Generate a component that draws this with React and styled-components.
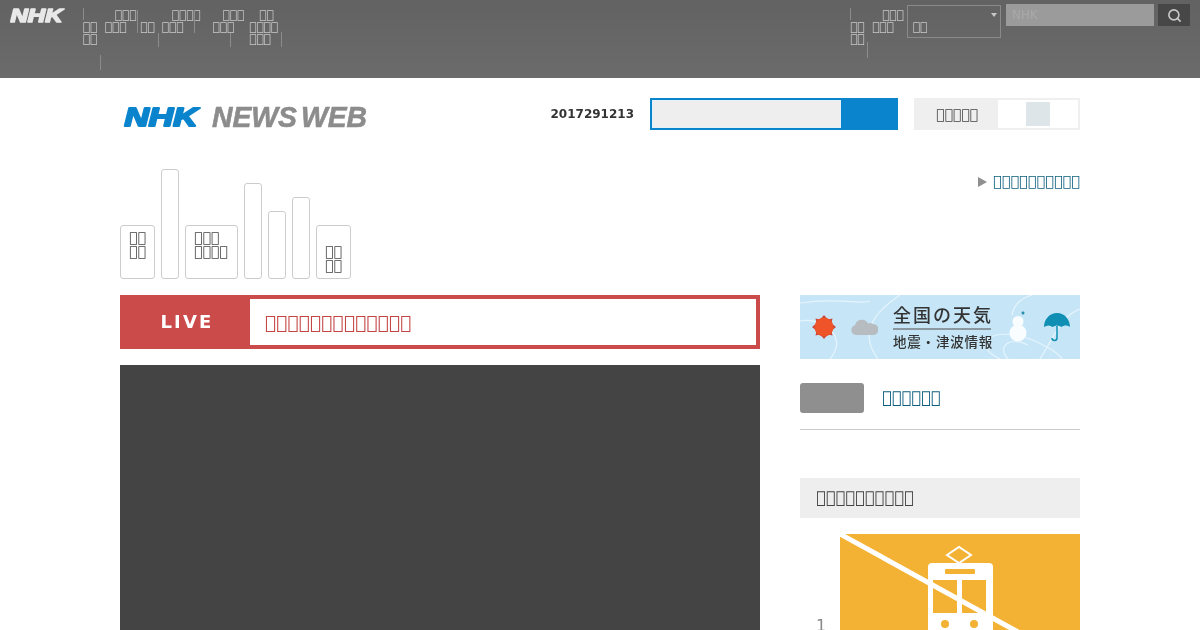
import React from "react";
import styled, { createGlobalStyle } from "styled-components";
import { Search } from "lucide-react";

// the page text shows as missing-glyph boxes in the reference
const boxes = (n) => "\uE000".repeat(n);

const GlobalStyle = createGlobalStyle`
  html, body {
    margin: 0;
    height: 630px;
    overflow: hidden;
    background: #fff;
    font-family: "DejaVu Sans", sans-serif;
  }
`;

const TopBar = styled.header`
  height: 78px;
  background: linear-gradient(#626262, #6b6b6b);
  display: flex;
  justify-content: space-between;
  color: #c8c8c8;
  font-size: 12px;
  line-height: 12px;
  will-change: transform;
`;

const TopLeft = styled.div`
  display: flex;
  align-items: flex-start;
`;

const TopLogo = styled.svg`
  display: block;
  margin: 6px 0 0 9px;
`;

const TopNav = styled.nav`
  display: flex;
  align-items: flex-start;
  margin-left: ${(p) => p.$left}px;
`;

const TopItem = styled.div`
  position: relative;
  margin-left: ${(p) => p.$left || 0}px;
  padding-top: ${(p) => p.$top}px;
`;

const ItemLine = styled.div`
  white-space: nowrap;
  padding-left: ${(p) => p.$indent || 0}px;
`;

const Tick = styled.i`
  position: absolute;
  left: ${(p) => p.$x}px;
  top: ${(p) => p.$y}px;
  height: ${(p) => p.$h}px;
  width: 1px;
  background: #8c8c8c;
`;

const TopRight = styled.div`
  display: flex;
  align-items: flex-start;
  padding-right: 10px;
`;

const Select = styled.div`
  box-sizing: border-box;
  width: 94px;
  height: 33px;
  margin: 5px 0 0 3px;
  border: 1px solid #8a8a8a;
  padding: 15px 0 0 5px;
  position: relative;
  &::after {
    content: "";
    position: absolute;
    right: 3px;
    top: 7px;
    border: 3.5px solid transparent;
    border-top: 4px solid #c8c8c8;
  }
`;

const SiteSearch = styled.div`
  box-sizing: border-box;
  width: 148px;
  height: 22px;
  margin: 4px 0 0 5px;
  background: #9b9b9b;
  color: #a9a9a9;
  padding: 5px 6px;
`;

const SiteSearchButton = styled.div`
  width: 32px;
  height: 22px;
  margin: 4px 0 0 4px;
  background: #474747;
  color: #c8c8c8;
  display: flex;
  align-items: center;
  justify-content: center;
`;

const Page = styled.div`
  width: 960px;
  margin: 0 auto;
  will-change: transform;
`;

const Masthead = styled.div`
  display: flex;
  align-items: center;
  margin-top: 20px;
  height: 32px;
`;

const Logo = styled.svg`
  display: block;
  margin-right: auto;
`;

const DateText = styled.div`
  font-size: 12px;
  font-weight: 700;
  color: #333;
  margin-right: 16px;
`;

const NewsSearch = styled.div`
  box-sizing: border-box;
  width: 248px;
  height: 32px;
  display: flex;
  border: 2px solid #0a84cc;
  background: #0a84cc;
  margin-right: 16px;
`;

const NewsInput = styled.div`
  width: 189px;
  background: #eeeeee;
  border: 1px solid #e4f1f9;
  box-sizing: border-box;
`;

const Toggle = styled.div`
  box-sizing: border-box;
  width: 166px;
  height: 32px;
  display: flex;
  border: 2px solid #efefef;
`;

const ToggleLabel = styled.div`
  width: 82px;
  background: #efefef;
  color: #444;
  font-size: 14px;
  display: flex;
  align-items: center;
  justify-content: center;
`;

const ToggleTrack = styled.div`
  flex: 1;
  display: flex;
  justify-content: center;
  align-items: center;
  padding-right: 1px;
`;

const ToggleKnob = styled.div`
  width: 24px;
  height: 24px;
  background: #dde5e9;
`;

const NavRow = styled.div`
  display: flex;
  justify-content: space-between;
  align-items: flex-start;
  margin-top: 39px;
`;

const Tabs = styled.ul`
  list-style: none;
  margin: 0;
  padding: 0;
  display: flex;
  align-items: flex-end;
  gap: 6px;
  height: 110px;
`;

const Tab = styled.li`
  box-sizing: border-box;
  width: ${(p) => p.$w}px;
  height: ${(p) => p.$h}px;
  border: 1px solid #cccccc;
  border-radius: 3px;
  padding: ${(p) => p.$top ?? 4}px 0 0 8px;
  font-size: 14px;
  line-height: 14px;
  color: #444;
`;

const MoreLink = styled.a`
  display: flex;
  align-items: center;
  gap: 6px;
  margin-top: 4px;
  font-size: 14.5px;
  line-height: 17px;
  color: #0b5d7e;
`;

const Arrow = styled.span`
  border: 5px solid transparent;
  border-left: 9px solid #8f8f8f;
  border-right: 0;
`;

const Columns = styled.div`
  display: flex;
  justify-content: space-between;
  margin-top: 16px;
`;

const MainColumn = styled.main`
  width: 640px;
`;

const LiveBar = styled.div`
  box-sizing: border-box;
  height: 54px;
  display: flex;
  border: 4px solid #cb4b4b;
  background: #fff;
`;

const LiveBadge = styled.div`
  width: 126px;
  margin: -4px 0 -4px -4px;
  padding: 0 0 2px 4px;
  background: #cb4b4b;
  color: #fff;
  font-weight: 700;
  font-size: 18px;
  letter-spacing: 2.2px;
  display: flex;
  align-items: center;
  justify-content: center;
`;

const LiveTitle = styled.div`
  padding-left: 15px;
  color: #c44545;
  font-size: 18.8px;
  display: flex;
  align-items: center;
`;

const Video = styled.div`
  margin-top: 16px;
  height: 360px;
  background: #444444;
`;

const SideColumn = styled.aside`
  width: 280px;
`;

const WeatherBanner = styled.a`
  display: flex;
  align-items: center;
  height: 64px;
  position: relative;
  background: #c6e6f8;
  overflow: hidden;
`;

const Contours = styled.svg`
  position: absolute;
  inset: 0;
`;

const WeatherIcon = styled.svg`
  display: block;
  position: relative;
  flex: none;
  margin-left: ${(p) => p.$left}px;
`;

const WeatherText = styled.div`
  position: relative;
  margin-left: 15px;
  width: 98px;
  flex: none;
  color: #333;
  font-family: "Noto Sans CJK JP", sans-serif;
  font-weight: 500;
`;

const WeatherTitle = styled.div`
  font-size: 18px;
  line-height: 24px;
  padding-bottom: 2px;
  border-bottom: 2px solid #8b98a0;
  white-space: nowrap;
  letter-spacing: 2px;
`;

const WeatherSub = styled.div`
  font-size: 13.5px;
  line-height: 22px;
  white-space: nowrap;
  letter-spacing: 0.8px;
`;

const NewsRow = styled.div`
  display: flex;
  align-items: center;
  gap: 18px;
  margin-top: 24px;
  padding-bottom: 16px;
  border-bottom: 1px solid #cccccc;
`;

const GreyButton = styled.div`
  width: 64px;
  height: 30px;
  background: #8f8f8f;
  border-radius: 3px;
`;

const NewsLink = styled.a`
  font-size: 16.3px;
  line-height: 28px;
  color: #0b5d7e;
`;

const SectionTitle = styled.h2`
  margin: 48px 0 16px;
  height: 40px;
  padding-left: 16px;
  background: #eeeeee;
  color: #444;
  font-size: 16.3px;
  font-weight: 400;
  line-height: 40px;
`;

const RankItem = styled.div`
  display: flex;
`;

const RankNumber = styled.div`
  width: 40px;
  box-sizing: border-box;
  padding: 82px 0 0 16px;
  color: #888;
  font-size: 16px;
  line-height: 20px;
`;

const RankImage = styled.svg`
  display: block;
  background: #f3b233;
`;

const navLeft = [
  { top: 21, w: 22, lines: [[2], [2]], ticks: [{ x: 0, y: 8, h: 12 }, { x: 17, y: 55, h: 15 }] },
  { left: 0, top: 9, lines: [[3, 10], [3]], ticks: [{ x: 32, y: 10, h: 23 }] },
  { left: 4, top: 21, lines: [[2]], ticks: [{ x: 17, y: 33, h: 14 }] },
  { left: 7, top: 9, lines: [[4, 10], [3]], ticks: [{ x: 32, y: 10, h: 23 }] },
  { left: 12, top: 9, lines: [[3, 10], [3]], ticks: [{ x: 17, y: 33, h: 14 }] },
  { left: 5, top: 9, lines: [[2, 10], [4], [3]], ticks: [{ x: 32, y: 32, h: 15 }] },
];

const tabs = [
  { w: 35, h: 54, lines: [2, 2] },
  { w: 18, h: 110 },
  { w: 53, h: 54, lines: [3, 4] },
  { w: 18, h: 96 },
  { w: 18, h: 68 },
  { w: 18, h: 82 },
  { w: 35, h: 54, lines: [2, 2], top: 18 },
];

function NavItem({ item }) {
  return (
    <TopItem $left={item.left} $top={item.top} style={item.w ? { width: item.w } : undefined}>
      {item.lines.map(([n, indent], i) => (
        <ItemLine key={i} $indent={indent}>
          {boxes(n)}
        </ItemLine>
      ))}
      {item.ticks.map((t, i) => (
        <Tick key={i} $x={t.x} $y={t.y} $h={t.h} />
      ))}
    </TopItem>
  );
}

export default function App() {
  return (
    <>
      <GlobalStyle />
      <TopBar>
        <TopLeft>
          <TopLogo width="58" height="20" viewBox="0 0 58 20">
            <text
              x="1.500"
              y="16"
              textLength="52"
              lengthAdjust="spacingAndGlyphs"
              fontFamily="Liberation Sans"
              fontWeight="700"
              fontStyle="italic"
              fontSize="18"
              fill="#e8e8e8"
              stroke="#e8e8e8"
              strokeWidth="1.500"
              strokeLinejoin="round"
            >
              NHK
            </text>
          </TopLogo>
          <TopNav $left={16}>
            {navLeft.map((item, i) => (
              <NavItem key={i} item={item} />
            ))}
          </TopNav>
        </TopLeft>
        <TopRight>
          <TopNav $left={0}>
            <NavItem item={{ top: 21, w: 22, lines: [[2], [2]], ticks: [{ x: 0, y: 8, h: 12 }, { x: 17, y: 42, h: 16 }] }} />
            <NavItem item={{ top: 9, lines: [[3, 10], [3]], ticks: [] }} />
          </TopNav>
          <Select>{boxes(2)}</Select>
          <SiteSearch>NHK</SiteSearch>
          <SiteSearchButton>
            <Search size={15} strokeWidth={2.6} />
          </SiteSearchButton>
        </TopRight>
      </TopBar>
      <Page>
        <Masthead>
          <Logo width="250" height="44" viewBox="0 0 250 44">
            <text
              x="4.500"
              y="34"
              textLength="73"
              lengthAdjust="spacingAndGlyphs"
              fontFamily="Liberation Sans"
              fontWeight="700"
              fontStyle="italic"
              fontSize="25"
              fill="#0a84cc"
              stroke="#0a84cc"
              strokeWidth="2"
              strokeLinejoin="round"
            >
              NHK
            </text>
            <text
              x="92"
              y="35"
              textLength="155"
              lengthAdjust="spacingAndGlyphs"
              fontFamily="Liberation Sans"
              fontWeight="700"
              fontStyle="italic"
              fontSize="30"
              wordSpacing="-4"
              fill="#8c8c8c"
              stroke="#8c8c8c"
              strokeWidth="0.600"
            >
              NEWS WEB
            </text>
          </Logo>
          <DateText>2017291213</DateText>
          <NewsSearch>
            <NewsInput />
          </NewsSearch>
          <Toggle>
            <ToggleLabel>{boxes(5)}</ToggleLabel>
            <ToggleTrack>
              <ToggleKnob />
            </ToggleTrack>
          </Toggle>
        </Masthead>
        <NavRow>
          <Tabs>
            {tabs.map((t, i) => (
              <Tab key={i} $w={t.w} $h={t.h} $top={t.top}>
                {t.lines &&
                  t.lines.map((n, j) => <ItemLine key={j}>{boxes(n)}</ItemLine>)}
              </Tab>
            ))}
          </Tabs>
          <MoreLink>
            <Arrow />
            {boxes(10)}
          </MoreLink>
        </NavRow>
        <Columns>
          <MainColumn>
            <LiveBar>
              <LiveBadge>LIVE</LiveBadge>
              <LiveTitle>{boxes(13)}</LiveTitle>
            </LiveBar>
            <Video />
          </MainColumn>
          <SideColumn>
            <WeatherBanner>
              <Contours width="280" height="64" viewBox="0 0 280 64" fill="none" stroke="#e6f4fc" strokeWidth="1.2">
                <path d="M0 8 C40 2 60 10 70 6" />
                <path d="M30 64 C50 40 20 22 0 26" />
                <path d="M100 0 C70 20 60 40 78 64" />
                <path d="M200 64 C170 50 190 30 230 44 C250 52 260 60 262 64" />
                <path d="M208 64 C196 52 210 40 228 50" />
                <path d="M212 20 C214 8 224 2 232 0" />
                <path d="M240 64 C255 40 262 20 280 14" />
              </Contours>
              <WeatherIcon $left={12} width="24" height="24" viewBox="0 0 24 24">
                <g fill="#c9493d">
                  <path d="M12 0l3 3.5h-6zM12 24l-3-3.5h6zM0 12l3.5-3v6zM24 12l-3.5 3v-6z" />
                  <path d="M3.5 3.5l4.5 1-3.5 3.5zM20.500 3.500l-1 4.500-3.500-3.500zM3.500 20.500l1-4.500 3.500 3.500zM20.500 20.500l-4.500-1 3.500-3.500z" />
                </g>
                <circle cx="12" cy="12" r="9.500" fill="#ee5329" />
              </WeatherIcon>
              <WeatherIcon $left={15} width="27" height="16" viewBox="0 0 27 16">
                <path d="M5 16a5 5 0 0 1-1-9.800A7 7 0 0 1 17 4.500a5.800 5.800 0 0 1 5 .5 5.500 5.500 0 0 1 0 11z" fill="#b6bcbf" />
              </WeatherIcon>
              <WeatherText>
                <WeatherTitle>全国の天気</WeatherTitle>
                <WeatherSub>地震・津波情報</WeatherSub>
              </WeatherText>
              <WeatherIcon $left={16} width="22" height="34" viewBox="0 0 22 34">
                <circle cx="11" cy="23" r="8.500" fill="#fafdff" />
                <circle cx="11" cy="11.500" r="5.500" fill="#fafdff" />
                <path d="M16 1l1.800 2-1.800 2-1.800-2z" fill="#2b8fb0" />
              </WeatherIcon>
              <WeatherIcon $left={14} width="28" height="30" viewBox="0 0 28 30">
                <path d="M14 1C6 1 1 8 1 15c3-2 6-2 8.500 0 3-2 6-2 9 0 2.500-2 6-2 8.500 0C27 8 22 1 14 1z" fill="#0f8fb3" />
                <path d="M14 14v12a2.500 2.500 0 0 1-5 0" fill="none" stroke="#0f8fb3" strokeWidth="1.500" />
              </WeatherIcon>
            </WeatherBanner>
            <NewsRow>
              <GreyButton />
              <NewsLink>{boxes(6)}</NewsLink>
            </NewsRow>
            <SectionTitle>{boxes(10)}</SectionTitle>
            <RankItem>
              <RankNumber>1</RankNumber>
              <RankImage width="240" height="135" viewBox="0 0 240 135">
                <path d="M107 21l12-8 12 8-12 8z" fill="none" stroke="#fff" strokeWidth="2" />
                <rect x="88" y="29" width="65" height="106" rx="4" fill="#fff" />
                <rect x="105" y="35" width="30" height="5" rx="1" fill="#f3b233" />
                <rect x="93" y="46" width="24" height="33" fill="#f3b233" />
                <rect x="122" y="46" width="24" height="33" fill="#f3b233" />
                <circle cx="105" cy="90" r="4" fill="#f3b233" />
                <circle cx="134" cy="90" r="4" fill="#f3b233" />
                <path d="M0 0L178 98" stroke="#fff" strokeWidth="5" />
              </RankImage>
            </RankItem>
          </SideColumn>
        </Columns>
      </Page>
    </>
  );
}
